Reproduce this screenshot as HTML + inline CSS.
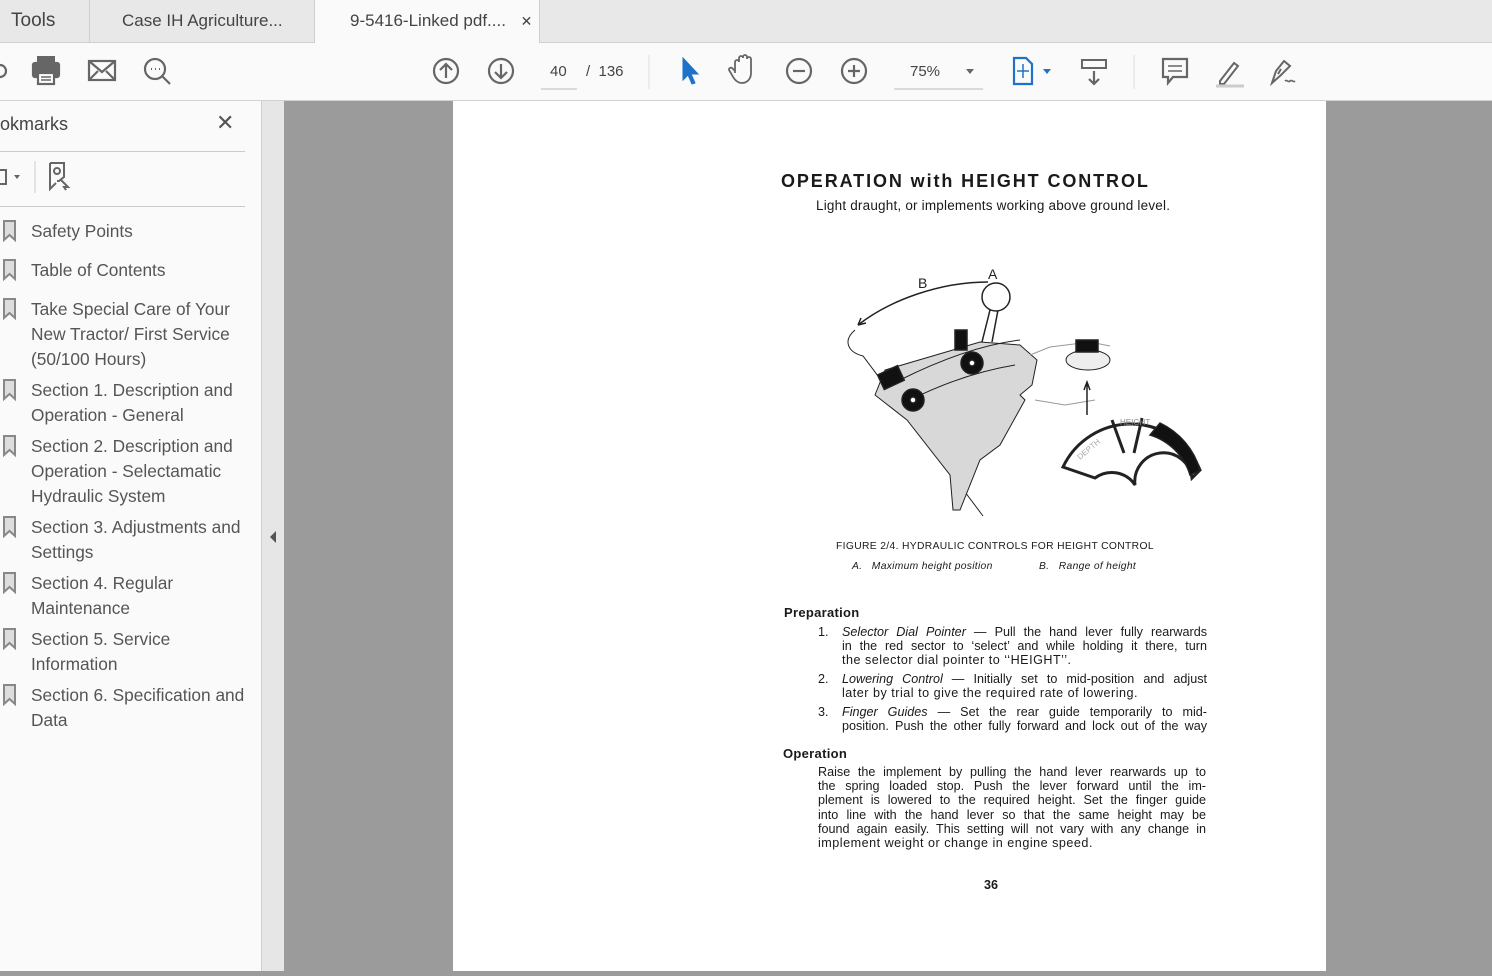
<!DOCTYPE html>
<html><head><meta charset="utf-8">
<style>
*{margin:0;padding:0;box-sizing:border-box}
body{width:1492px;height:971px;overflow:hidden;position:relative;background:#9b9b9b;font-family:"Liberation Sans",sans-serif}
.abs{position:absolute}
#tabs{left:0;top:0;width:1492px;height:43px;background:#e8e8e8;border-bottom:1px solid #cfcfcf}
.tab{position:absolute;top:0;height:43px;font-size:18px;color:#444;line-height:42px}
#tb{left:0;top:43px;width:1492px;height:58px;background:#fafafa;border-bottom:1px solid #d2d2d2}
#side{left:0;top:101px;width:262px;height:870px;background:#fafafa;border-right:1px solid #cfcfcf}
#split{left:262px;top:101px;width:22px;height:870px;background:#e6e6e6}
#page{left:453px;top:101px;width:873px;height:870px;background:#fff}
.bm{position:absolute;left:31px;font-size:17.3px;color:#555;line-height:25px}
.pt{position:absolute;font-size:12.6px;color:#1a1a1a;line-height:14px;white-space:nowrap}
.j{text-align:justify;text-align-last:justify;white-space:normal}
.l{letter-spacing:0.5px}
</style></head><body>
<div id="tabs" class="abs">
 <div class="tab" style="left:0;width:90px;border-right:1px solid #cfcfcf;padding-left:11px;font-size:19px">Tools</div>
 <div class="tab" style="left:90px;width:225px;border-right:1px solid #cfcfcf;padding-left:32px;font-size:17px">Case IH Agriculture...</div>
 <div class="tab" style="left:315px;width:225px;height:44px;background:#fafafa;border-right:1px solid #cfcfcf;padding-left:35px;font-size:17px">9-5416-Linked pdf.... <span style="margin-left:10px;font-size:14px">✕</span></div>
</div>
<div id="tb" class="abs">
<svg width="1492" height="58" style="position:absolute;left:0;top:0" fill="none" stroke="#666" stroke-width="2.2">
 <circle cx="0" cy="28" r="6"/>
 <rect x="33" y="20" width="26" height="14" rx="2" fill="#666"/><rect x="37" y="13" width="18" height="8" fill="#666" stroke="none"/><rect x="38" y="30" width="16" height="11" fill="#fff"/><path d="M41 34h10M41 37h10" stroke-width="1.4"/>
 <rect x="89" y="18" width="26" height="19"/><path d="M89 18l13 11 13-11M89 37l9-9M115 37l-9-9"/>
 <circle cx="155" cy="26" r="10"/><path d="M162 33l8 8"/><path d="M151 26h1M155 26h1M159 26h1" stroke-width="2"/>
 <circle cx="446" cy="28" r="12"/><path d="M446 35V21M440 27l6-6 6 6"/>
 <circle cx="501" cy="28" r="12"/><path d="M501 21v14M495 29l6 6 6-6"/>
 <path d="M541 46h36M894 46h89" stroke="#bbb" stroke-width="1"/>
 <path d="M649 12v34M1134 12v34" stroke="#ddd" stroke-width="1"/>
 <path d="M683 15l0 22 5-5 4 9 3-1-4-9 7 0z" fill="#1f72c9" stroke="#1f72c9" stroke-width="1"/>
 <path d="M735 30v-11a2 2 0 014 0v-4a2 2 0 014 0v-1a2 2 0 014 0v2a2 2 0 014 0v14c0 6-4 10-9 10s-8-4-10-8l-3-5a2 2 0 013-2l3 3" stroke-width="1.8"/>
 <circle cx="799" cy="28" r="12"/><path d="M793 28h12"/>
 <circle cx="854" cy="28" r="12"/><path d="M848 28h12M854 22v12"/>
 <path d="M966 26l4 5 4-5z" fill="#666" stroke="none"/>
 <path d="M1014 15h12l6 6v20h-18z" stroke="#1f72c9"/><path d="M1023 21v14M1017 28h12" stroke="#1f72c9" stroke-width="1.5"/>
 <path d="M1043 26l4 5 4-5z" fill="#1f72c9" stroke="none"/>
 <rect x="1082" y="17" width="24" height="8" stroke-width="2"/><path d="M1094 28v13M1089 36l5 5 5-5"/>
 <path d="M1163 16h24v18h-14l-5 6v-6h-5z"/><path d="M1168 23h14M1168 28h14" stroke-width="1.5"/>
 <path d="M1220 38l14-18 4 3-14 18h-4z" stroke-width="2"/><path d="M1216 43h28" stroke="#ccc" stroke-width="3"/>
 <path d="M1272 40l4-12 8-10 6 5-9 9zM1281 26l-3 5" stroke-width="2"/><path d="M1285 38c2-2 3 2 5 0s3 2 5 0" stroke-width="1.6"/>
</svg>
<div class="abs" style="left:550px;top:20px;font-size:15px;color:#444">40</div>
<div class="abs" style="left:586px;top:20px;font-size:15px;color:#444">/&nbsp; 136</div>
<div class="abs" style="left:910px;top:20px;font-size:15px;color:#444">75%</div>
</div>
<div id="side" class="abs">
 <div class="abs" style="left:0;top:13px;font-size:18px;color:#444">okmarks</div>
 <div class="abs" style="left:216px;top:9px;font-size:22px;color:#555">✕</div>
 <div class="abs" style="left:0;top:50px;width:245px;height:1px;background:#ccc"></div>
 <svg class="abs" style="left:0;top:58px" width="80" height="40" fill="none" stroke="#666" stroke-width="2"><rect x="-4" y="11" width="10" height="14"/><path d="M14 16l3 4 3-4z" fill="#666" stroke="none"/><path d="M35 2v32" stroke="#ccc" stroke-width="1"/><path d="M50 4h14v14l-5 4-2 0M50 4v26l6-6" /><circle cx="57" cy="12" r="3"/><path d="M60 20l8 8-4 0 2 3" /></svg>
 <div class="abs" style="left:0;top:105px;width:245px;height:1px;background:#ccc"></div>
</div>
<svg class="abs" style="left:0;top:0" width="20" height="971">
 <g fill="#ddd" stroke="#888" stroke-width="2">
 <path d="M4 221h11v19l-5.5-5-5.5 5z"/><path d="M4 260h11v19l-5.5-5-5.5 5z"/><path d="M4 299h11v19l-5.5-5-5.5 5z"/><path d="M4 380h11v19l-5.5-5-5.5 5z"/><path d="M4 436h11v19l-5.5-5-5.5 5z"/><path d="M4 517h11v19l-5.5-5-5.5 5z"/><path d="M4 573h11v19l-5.5-5-5.5 5z"/><path d="M4 629h11v19l-5.5-5-5.5 5z"/><path d="M4 685h11v19l-5.5-5-5.5 5z"/>
 </g></svg>
<div class="bm" style="top:219px">Safety Points</div>
<div class="bm" style="top:258px">Table of Contents</div>
<div class="bm" style="top:297px">Take Special Care of Your<br>New Tractor/ First Service<br>(50/100 Hours)</div>
<div class="bm" style="top:378px">Section 1. Description and<br>Operation - General</div>
<div class="bm" style="top:434px">Section 2. Description and<br>Operation - Selectamatic<br>Hydraulic System</div>
<div class="bm" style="top:515px">Section 3. Adjustments and<br>Settings</div>
<div class="bm" style="top:571px">Section 4. Regular<br>Maintenance</div>
<div class="bm" style="top:627px">Section 5. Service<br>Information</div>
<div class="bm" style="top:683px">Section 6. Specification and<br>Data</div>
<div id="split" class="abs"><svg width="22" height="870"><path d="M14 430l-6 6 6 6z" fill="#555"/></svg></div>
<div id="page" class="abs"></div>
<div class="pt" style="left:781px;top:171px;font-size:18px;font-weight:bold;letter-spacing:1.9px;line-height:20px">OPERATION with HEIGHT CONTROL</div>
<div class="pt" style="left:816px;top:199px;font-size:13.5px;letter-spacing:0.2px">Light draught, or implements working above ground level.</div>
<svg class="abs" style="left:830px;top:260px" width="380" height="320" fill="none" stroke="#222" stroke-width="1.5">
 <path d="M158 22C110 22 60 40 28 65" /><path d="M28 65l8-2M28 65l3-7"/>
 <path d="M25 70c-12 10-8 22 8 26l120 160" stroke-width="1"/>
 <text x="88" y="28" font-size="14" fill="#222" stroke="none" font-family="Liberation Sans">B</text>
 <text x="158" y="19" font-size="14" fill="#222" stroke="none" font-family="Liberation Sans">A</text>
 <path d="M152 82l8-32 8 0-6 32" fill="#fff"/>
 <circle cx="166" cy="37" r="14" fill="#fff"/>
 <path d="M45 135l10-25 95-28 40 3 17 15-5 25-12 10 5 5-25 45-20 15-20 50-7 0-3-35-43-55z" fill="#d8d8d8" stroke-width="1"/>
 <path d="M200 95l20-8 40-5 20 4M205 140l30 5 30-5" stroke="#999" stroke-width="1"/>
 <path d="M70 120c40-20 80-35 120-40M80 140c40-20 75-30 105-35" stroke-width="1"/>
 <rect x="50" y="110" width="22" height="16" fill="#111" transform="rotate(-25 60 118)"/>
 <circle cx="83" cy="140" r="11" fill="#111"/><circle cx="83" cy="140" r="3" fill="#fff"/>
 <rect x="125" y="70" width="12" height="20" fill="#111"/>
 <circle cx="142" cy="103" r="11" fill="#111"/><circle cx="142" cy="103" r="3" fill="#fff"/>
 <ellipse cx="258" cy="100" rx="22" ry="10" fill="#eee" stroke-width="1"/>
 <rect x="246" y="80" width="22" height="12" fill="#111"/>
 <path d="M257 155v-32M254 130l3-8 3 8"/>
 <path d="M233 207A75 75 0 0 1 370 210L362 218A28 28 0 0 0 305 225h0A28 28 0 0 0 265 218Z" fill="#fff" stroke-width="3"/>
 <path d="M282 160l12 33M312 158l-8 35" stroke-width="3"/>
 <path d="M330 163A75 75 0 0 1 370 210L360 215A60 60 0 0 0 320 175Z" fill="#111"/>
 <text x="290" y="165" font-size="8" fill="#888" stroke="none" font-family="Liberation Sans">HEIGHT</text>
 <text x="250" y="200" font-size="8" fill="#aaa" stroke="none" font-family="Liberation Sans" transform="rotate(-40 250 200)">DEPTH</text>
</svg>
<div class="pt" style="left:836px;top:540px;font-size:10.3px;letter-spacing:0.35px">FIGURE 2/4. HYDRAULIC CONTROLS FOR HEIGHT CONTROL</div>
<div class="pt" style="left:852px;top:560px;font-size:10.3px;font-style:italic;letter-spacing:0.3px">A.&nbsp;&nbsp; Maximum height position</div>
<div class="pt" style="left:1039px;top:560px;font-size:10.3px;font-style:italic;letter-spacing:0.3px">B.&nbsp;&nbsp; Range of height</div>
<div class="pt" style="left:784px;top:606px;font-weight:bold;font-size:13px;letter-spacing:0.3px">Preparation</div>
<div class="pt" style="left:818px;top:625px">1.</div>
<div class="pt j" style="left:842px;top:625px;width:365px"><i>Selector Dial Pointer</i> — Pull the hand lever fully rearwards</div>
<div class="pt j" style="left:842px;top:639px;width:365px">in the red sector to ‘select’ and while holding it there, turn</div>
<div class="pt l" style="left:842px;top:653px">the selector dial pointer to ‘‘HEIGHT’’.</div>
<div class="pt" style="left:818px;top:672px">2.</div>
<div class="pt j" style="left:842px;top:672px;width:365px"><i>Lowering Control</i> — Initially set to mid-position and adjust</div>
<div class="pt l" style="left:842px;top:686px">later by trial to give the required rate of lowering.</div>
<div class="pt" style="left:818px;top:705px">3.</div>
<div class="pt j" style="left:842px;top:705px;width:365px"><i>Finger Guides</i> — Set the rear guide temporarily to mid-</div>
<div class="pt j" style="left:842px;top:719px;width:365px">position. Push the other fully forward and lock out of the way</div>
<div class="pt" style="left:783px;top:747px;font-weight:bold;font-size:13px;letter-spacing:0.3px">Operation</div>
<div class="pt j" style="left:818px;top:765px;width:388px">Raise the implement by pulling the hand lever rearwards up to</div>
<div class="pt j" style="left:818px;top:779px;width:388px">the spring loaded stop. Push the lever forward until the im-</div>
<div class="pt j" style="left:818px;top:793px;width:388px">plement is lowered to the required height. Set the finger guide</div>
<div class="pt j" style="left:818px;top:808px;width:388px">into line with the hand lever so that the same height may be</div>
<div class="pt j" style="left:818px;top:822px;width:388px">found again easily. This setting will not vary with any change in</div>
<div class="pt l" style="left:818px;top:836px">implement weight or change in engine speed.</div>
<div class="pt" style="left:984px;top:878px;font-weight:bold">36</div>
</body></html>
